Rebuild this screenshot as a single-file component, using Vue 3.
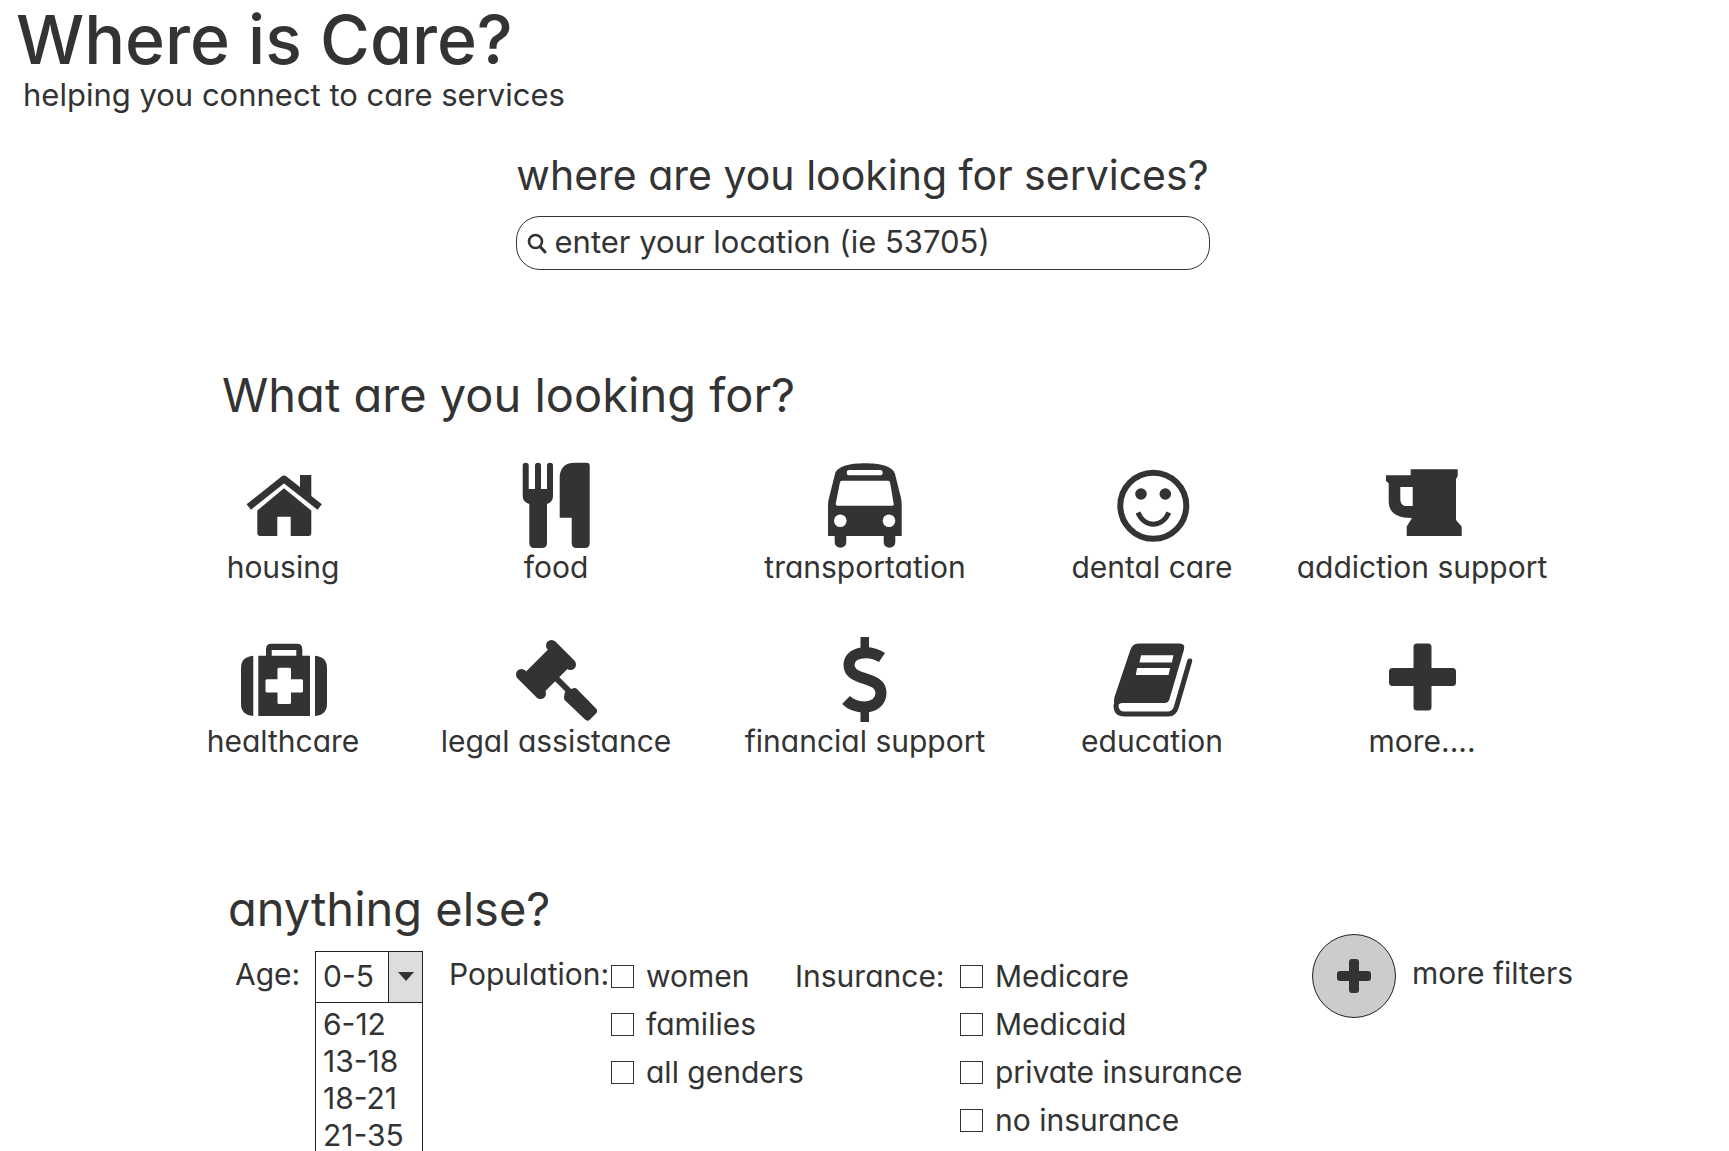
<script setup>
import { ref } from 'vue'

const place = ref('')
const age = ref('0-5')
const ages = ['6-12', '13-18', '18-21', '21-35']

const services = [
  { id: 'housing', label: 'housing' },
  { id: 'food', label: 'food' },
  { id: 'bus', label: 'transportation' },
  { id: 'smile', label: 'dental care' },
  { id: 'mug', label: 'addiction support' },
  { id: 'health', label: 'healthcare' },
  { id: 'gavel', label: 'legal assistance' },
  { id: 'dollar', label: 'financial support' },
  { id: 'book', label: 'education' },
  { id: 'plus', label: 'more....' },
]

const population = ['women', 'families', 'all genders']
const insurance = ['Medicare', 'Medicaid', 'private insurance', 'no insurance']
</script>

<template>
  <div class="page">
    <header class="brand">
      <h1>Where is Care?</h1>
      <p>helping you connect to care services</p>
    </header>

    <main>
      <form class="search" @submit.prevent>
        <label for="place">where are you looking for services?</label>
        <div class="search-box">
          <svg class="lens" viewBox="0 0 21 21" aria-hidden="true">
            <circle cx="8.500" cy="8.500" r="6.500" fill="none" stroke="currentColor" stroke-width="2.600" />
            <path d="M13 13.500 18 19" stroke="currentColor" stroke-width="3" stroke-linecap="round" />
          </svg>
          <input id="place" v-model="place" type="text" placeholder="enter your location (ie 53705)" />
        </div>
      </form>

      <section class="services">
        <h2>What are you looking for?</h2>
        <div class="tiles">
          <button v-for="s in services" :key="s.id" type="button" class="tile">
            <svg class="icon" viewBox="0 0 86 86" fill="currentColor" aria-hidden="true">
              <g v-if="s.id === 'housing'">
                <path d="M60 13H71.300V39L60 30Z" />
                <path d="M8.800 45 44 17 79.700 45" fill="none" stroke="currentColor" stroke-width="7" stroke-linejoin="round" />
                <path d="M44 26.300 71.300 48.500V71Q71.300 74 68.300 74H50.700V54.700H37.300V74H20.300Q17.300 74 17.300 71V48.500Z" />
              </g>
              <g v-else-if="s.id === 'food'">
                <path d="M9.700 3.500Q9.700 .7 12.700 .7T15.700 3.500V27H22V3.500Q22 .7 25 .7T28 3.500V27H34V3.500Q34 .7 37 .7T40 3.500V34Q40 40 34 42V81Q34 86 29 86H21.300Q16.300 86 16.300 81V42Q9.700 40 9.700 34Z" />
                <path d="M46.700 55.700V14Q48 .7 62 .7H73.700Q76.700 .7 76.700 3.700V81Q76.700 86 72 86H63.500Q58.700 86 58.700 81V55.700Z" />
              </g>
              <path
                v-else-if="s.id === 'bus'"
                fill-rule="evenodd"
                d="M43 1.300C57 1.300 71 4 73 12L79 36Q79.700 39 79.700 43V74H73.300V80C73.300 87.500 61.700 87.500 61.700 80V74H24.300V80C24.300 87.500 12.700 87.500 12.700 80V74H6V43Q6 39 7 36L13 12C15 4 29 1.300 43 1.300ZM27 8Q24.700 8 24.700 10.700T27 13.300H58.500Q60.700 13.300 60.700 10.700T58.500 8ZM20 18.700Q18.200 18.700 17.800 21L13.700 42Q13.500 43.700 15.500 43.700H70Q72 43.700 71.700 42L68.200 21Q67.800 18.700 66 18.700ZM18.300 52.400A6.300 6.300 0 1 0 18.300 65A6.300 6.300 0 1 0 18.300 52.400ZM67 52.400A6.300 6.300 0 1 0 67 65A6.300 6.300 0 1 0 67 52.400Z"
              />
              <g v-else-if="s.id === 'smile'">
                <circle cx="44.300" cy="43.700" r="33" fill="none" stroke="currentColor" stroke-width="6" />
                <circle cx="32" cy="32" r="5.800" />
                <circle cx="56.300" cy="32" r="5.800" />
                <path d="M29 50.500C35 66 53.500 66 59.800 50.500" fill="none" stroke="currentColor" stroke-width="5" />
              </g>
              <path
                v-else-if="s.id === 'mug'"
                fill-rule="evenodd"
                d="M31.700 7.300H78.700V14L77 17V58L82.700 64.500V74H27.700V64.500L33 56C18 56 9.700 51 9.700 39V21.300L7 19V13.300H31.700ZM21.300 25V38Q22 44 27.500 44H33.700V25Z"
              />
              <g v-else-if="s.id === 'health'">
                <path d="M13.300 19.700V80Q1 79 1 68V32Q1 20.700 13.300 19.700ZM75 19.700Q87 20.700 87 32V68Q87 79 75 80Z" />
                <path
                  fill-rule="evenodd"
                  d="M18.300 19.700H26V13Q26 7.700 31.500 7.700H57Q62.300 7.700 62.300 13V19.700H70V80H18.300ZM31.700 14V19.700H56.300V14ZM39 31.700Q37.500 31.700 37.500 33.200V43.300H27Q25.500 43.300 25.500 44.800V55Q25.500 56.500 27 56.500H37.500V66.500Q37.500 68 39 68H49.500Q51 68 51 66.500V56.500H61.500Q63 56.500 63 55V44.800Q63 43.300 61.500 43.300H51V33.200Q51 31.700 49.500 31.700Z"
                />
              </g>
              <g v-else-if="s.id === 'gavel'" stroke="currentColor" stroke-linecap="round" stroke-linejoin="round">
                <path d="M38.500 9.500 57.500 28.500M8.500 38.500 27.500 57.500" stroke-width="11" />
                <path d="M36.500 15 53 31.500 31 53.500 14.500 37Z" stroke-width="4" />
                <path d="M43 42 56 55" stroke-width="6" />
                <path d="M61.500 55.500 80.500 75 74.500 81 54.500 62 55 58Z" stroke-width="7" />
              </g>
              <g v-else-if="s.id === 'dollar'">
                <path d="M38.500 1H47V16H38.500ZM38.500 72H47V86H38.500Z" />
                <path
                  d="M60 21.500C55.500 18.500 49.500 16.700 44 16.700C33.500 16.700 27 21.500 27 29C27 46 59 39 59 57C59 66 51.500 71 42.500 71C35 71 28.500 68.500 24 64"
                  fill="none"
                  stroke="currentColor"
                  stroke-width="11"
                />
              </g>
              <g v-else-if="s.id === 'book'">
                <path
                  fill-rule="evenodd"
                  d="M29.500 7.500H70.500Q76.500 7.500 75 13.500L60.500 63Q59.500 67 55.500 67H13.500Q9.500 67 8.500 71Q3.500 69 5.500 61L21.500 13.500Q23.500 7.500 29.500 7.500ZM32.100 19.300 30.400 26.500H62.900L64.500 19.300ZM28.100 31.900 26.800 38.900H59.500L61.200 31.900Z"
                />
                <path d="M80.700 25 67.500 70.500Q65.500 78 59.500 78H15.500Q7 78 7 69.500" fill="none" stroke="currentColor" stroke-width="5" stroke-linecap="round" />
              </g>
              <g v-else>
                <rect x="10" y="32" width="67" height="18" rx="3.500" />
                <rect x="34.500" y="7.500" width="18" height="67" rx="3.500" />
              </g>
            </svg>
            <span>{{ s.label }}</span>
          </button>
        </div>
      </section>

      <section class="extras">
        <h2>anything else?</h2>
        <div class="filters">
          <div class="group">
            <label class="name age-name" for="age">Age:</label>
            <div class="picker">
              <div class="field">
                <select id="age" v-model="age">
                  <option>0-5</option>
                  <option v-for="a in ages" :key="a">{{ a }}</option>
                </select>
                <svg class="arrow" viewBox="0 0 16 9" aria-hidden="true"><path d="M0 0H16L8 9Z" fill="currentColor" /></svg>
              </div>
              <ul class="menu">
                <li v-for="a in ages" :key="a" @click="age = a">{{ a }}</li>
              </ul>
            </div>
          </div>

          <div class="group" role="group" aria-labelledby="pop-name">
            <span id="pop-name" class="name pop-name">Population:</span>
            <div class="checks">
              <label v-for="p in population" :key="p"><input type="checkbox" /><span>{{ p }}</span></label>
            </div>
          </div>

          <div class="group" role="group" aria-labelledby="ins-name">
            <span id="ins-name" class="name ins-name">Insurance:</span>
            <div class="checks">
              <label v-for="i in insurance" :key="i"><input type="checkbox" /><span>{{ i }}</span></label>
            </div>
          </div>

          <button type="button" class="more">
            <span class="disc">
              <svg viewBox="0 0 34 34" fill="currentColor" aria-hidden="true">
                <rect x="0" y="12" width="34" height="10" rx="3" />
                <rect x="12" y="0" width="10" height="34" rx="3" />
              </svg>
            </span>
            <span class="more-text">more filters</span>
          </button>
        </div>
      </section>
    </main>
  </div>
</template>

<style>
body {
  background: #fff;
}
</style>

<style scoped>
.page {
  color: #333;
  font-family: Inter, "Open Sans", sans-serif;
  font-size: 30px;
  line-height: 34px;
  font-feature-settings: "cv11";
}
h1,
h2,
p,
ul {
  margin: 0;
  padding: 0;
  font-weight: 400;
}
button,
input,
select {
  margin: 0;
  color: inherit;
  font: inherit;
  font-feature-settings: inherit;
}
button {
  padding: 0;
  border: 0;
  background: none;
  cursor: pointer;
}
.brand {
  padding-left: 16px;
}
h1 {
  font-size: 68px;
  line-height: 78px;
  font-weight: 500;
}
.brand p {
  margin-left: 7px;
  font-size: 31px;
}
.search {
  display: flex;
  flex-direction: column;
  align-items: center;
  margin-top: 39px;
  padding-right: 4px;
}
.search > label {
  font-size: 41px;
  line-height: 48px;
}
.search-box {
  display: flex;
  align-items: center;
  box-sizing: border-box;
  width: 100%;
  max-width: 694px;
  height: 54px;
  margin-top: 17px;
  padding: 0 16px 0 10px;
  border: 1px solid #333;
  border-radius: 24px;
}
.lens {
  flex: none;
  width: 21px;
  height: 21px;
}
.search-box input {
  flex: 1;
  min-width: 0;
  height: 40px;
  padding: 0 0 3px;
  margin-left: 7px;
  border: 0;
  outline: 0;
  background: none;
  font-size: 31px;
}
.search-box input::placeholder {
  color: #333;
  opacity: 1;
}
h2 {
  font-size: 47px;
  line-height: 50px;
}
.services {
  margin-top: 100px;
}
.services h2 {
  padding-left: 222px;
}
.tiles {
  display: grid;
  grid-template-columns: 270fr 276fr 342fr 232fr 308fr;
  row-gap: 50px;
  margin: 42px 153px 0 148px;
}
.tile {
  display: flex;
  flex-direction: column;
  align-items: center;
  line-height: 38px;
  white-space: nowrap;
}
.icon {
  width: 86px;
  height: 86px;
  overflow: visible;
}
.extras {
  margin-top: 124px;
}
.extras h2 {
  padding-left: 228px;
}
.filters {
  display: grid;
  grid-template-columns: minmax(0, 214fr) minmax(0, 346fr) minmax(0, 517fr) minmax(0, 281fr);
  align-items: start;
  margin: 0 136px 0 235px;
}
.group {
  display: flex;
  align-items: flex-start;
  padding-top: 17px;
  white-space: nowrap;
}
.name {
  flex: none;
  line-height: 46px;
}
.age-name {
  width: 80px;
}
.pop-name {
  width: 162px;
}
.ins-name {
  width: 165px;
  line-height: 50px;
}
.picker {
  width: 108px;
}
.field {
  position: relative;
}
select {
  display: block;
  box-sizing: border-box;
  width: 100%;
  height: 52px;
  padding: 0 0 3px 7px;
  border: 1px solid #222;
  border-radius: 0;
  appearance: none;
  background: linear-gradient(90deg, #fff 72px, #222 72px, #222 73px, #ddd 73px);
}
.arrow {
  position: absolute;
  top: 21px;
  right: 9px;
  width: 16px;
  height: 9px;
  pointer-events: none;
}
.menu {
  border: solid #222;
  border-width: 0 1px;
  list-style: none;
}
.menu li {
  padding: 5px 0 0 7px;
  line-height: 32px;
}
.checks label {
  display: flex;
  align-items: center;
  height: 48px;
}
.checks label:first-child {
  margin-top: 1px;
}
.checks input {
  appearance: none;
  box-sizing: border-box;
  width: 23px;
  height: 23px;
  margin: 0 12px 0 0;
  border: 1px solid #333;
  background: #fff;
}
.checks input:checked {
  background: #333;
}
.checks span {
  padding-bottom: 1px;
}
.more {
  display: flex;
  align-items: center;
  gap: 16px;
  white-space: nowrap;
}
.disc {
  display: flex;
  align-items: center;
  justify-content: center;
  box-sizing: border-box;
  width: 84px;
  height: 84px;
  border: 1px solid #222;
  border-radius: 50%;
  background: #ccc;
}
.disc svg {
  width: 34px;
  height: 34px;
}
.more-text {
  padding-bottom: 7px;
}
</style>
